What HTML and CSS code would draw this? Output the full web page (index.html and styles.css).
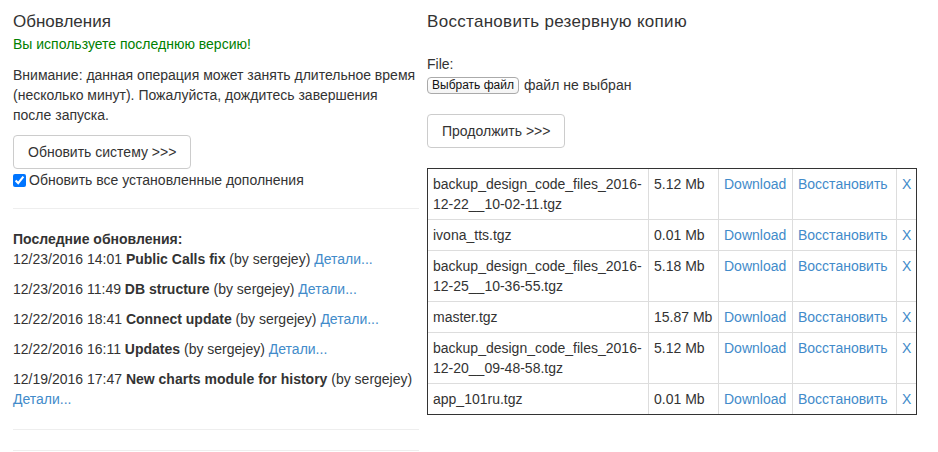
FILE: index.html
```html
<!DOCTYPE html>
<html lang="ru">
<head>
<meta charset="utf-8">
<title>Обновления</title>
<link rel="stylesheet" href="styles.css">
</head>
<body>
<div class="page">
  <div class="col-left">
    <h4 class="title">Обновления</h4>
    <div class="success">Вы используете последнюю версию!</div>
    <p class="note">Внимание: данная операция может занять длительное время (несколько минут). Пожалуйста, дождитесь завершения после запуска.</p>
    <button class="btn" type="button">Обновить систему &gt;&gt;&gt;</button>
    <label class="check"><input type="checkbox" checked> Обновить все установленные дополнения</label>
    <hr class="rule">
    <div class="history">
      <div class="history-title">Последние обновления:</div>
      <p class="item">12/23/2016 14:01 <b>Public Calls fix</b> (by sergejey) <a href="#">Детали...</a></p>
      <p class="item">12/23/2016 11:49 <b>DB structure</b> (by sergejey) <a href="#">Детали...</a></p>
      <p class="item">12/22/2016 18:41 <b>Connect update</b> (by sergejey) <a href="#">Детали...</a></p>
      <p class="item">12/22/2016 16:11 <b>Updates</b> (by sergejey) <a href="#">Детали...</a></p>
      <p class="item">12/19/2016 17:47 <b>New charts module for history</b> (by sergejey) <a href="#">Детали...</a></p>
    </div>
    <hr class="rule">
    <hr class="rule">
  </div>
  <div class="col-right">
    <h4 class="title title-wide">Восстановить резервную копию</h4>
    <div class="file-label">File:</div>
    <div class="file-row"><span class="file-btn">Выбрать файл</span><span class="file-name">файл не выбран</span></div>
    <button class="btn" type="button">Продолжить &gt;&gt;&gt;</button>
    <table class="backups">
      <tr>
        <td class="c-name">backup_design_code_files_2016-12-22__10-02-11.tgz</td>
        <td class="c-size">5.12 Mb</td>
        <td class="c-dl"><a href="#">Download</a></td>
        <td class="c-rs"><a href="#">Восстановить</a></td>
        <td class="c-x"><a href="#">X</a></td>
      </tr>
      <tr>
        <td>ivona_tts.tgz</td>
        <td>0.01 Mb</td>
        <td><a href="#">Download</a></td>
        <td><a href="#">Восстановить</a></td>
        <td><a href="#">X</a></td>
      </tr>
      <tr>
        <td>backup_design_code_files_2016-12-25__10-36-55.tgz</td>
        <td>5.18 Mb</td>
        <td><a href="#">Download</a></td>
        <td><a href="#">Восстановить</a></td>
        <td><a href="#">X</a></td>
      </tr>
      <tr>
        <td>master.tgz</td>
        <td>15.87 Mb</td>
        <td><a href="#">Download</a></td>
        <td><a href="#">Восстановить</a></td>
        <td><a href="#">X</a></td>
      </tr>
      <tr>
        <td>backup_design_code_files_2016-12-20__09-48-58.tgz</td>
        <td>5.12 Mb</td>
        <td><a href="#">Download</a></td>
        <td><a href="#">Восстановить</a></td>
        <td><a href="#">X</a></td>
      </tr>
      <tr>
        <td>app_101ru.tgz</td>
        <td>0.01 Mb</td>
        <td><a href="#">Download</a></td>
        <td><a href="#">Восстановить</a></td>
        <td><a href="#">X</a></td>
      </tr>
    </table>
  </div>
</div>
</body>
</html>
```

FILE: styles.css
```css
html, body {
  margin: 0;
  padding: 0;
  background: #fff;
}
body {
  font-family: "Liberation Sans", Arial, sans-serif;
  font-size: 14px;
  line-height: 20px;
  color: #333;
}
a {
  color: #428bca;
  text-decoration: none;
}
.page {
  display: grid;
  grid-template-columns: 406px 490px;
  column-gap: 8px;
  padding: 12px 0 0 13px;
  align-items: start;
}
.col-left, .col-right {
  display: flex;
  flex-direction: column;
  align-items: flex-start;
}
.title {
  margin: 0;
  font-size: 17px;
  font-weight: normal;
  line-height: 20px;
}
.title-wide {
  letter-spacing: 0.3px;
}
.success {
  color: #008000;
  margin-top: 2px;
}
.note {
  margin: 11px 0 0;
}
.btn {
  margin-top: 10px;
  font: inherit;
  color: #333;
  background: #fff;
  border: 1px solid #ccc;
  border-radius: 4px;
  padding: 6px 14px;
  line-height: 20px;
}
.check {
  display: flex;
  align-items: center;
  margin-top: 1px;
}
.check input {
  margin: 0 3px 0 0;
  width: 13px;
  height: 13px;
}
.rule {
  align-self: stretch;
  border: 0;
  border-top: 1px solid #eee;
  margin: 18px 0 0;
  height: 0;
}
.rule + .rule {
  margin-top: 20px;
}
.history {
  margin-top: 20px;
}
.history-title {
  font-weight: bold;
}
.item {
  margin: 0 0 10px;
}
.history + .rule {
  margin-top: 10px;
}
.file-label {
  margin-top: 22px;
}
.file-row {
  display: flex;
  align-items: center;
  margin-top: 2px;
  height: 18px;
}
.file-btn {
  display: inline-block;
  box-sizing: border-box;
  width: 92px;
  height: 17px;
  border: 1px solid #aaa;
  border-radius: 4px;
  background: linear-gradient(#fff, #f4f4f4);
  font-size: 12px;
  line-height: 15px;
  text-align: center;
  color: #111;
}
.file-name {
  margin-left: 5px;
}
.col-right .btn {
  margin-top: 20px;
}
.backups {
  margin-top: 20px;
  width: 490px;
  table-layout: fixed;
  border-collapse: separate;
  border-spacing: 0;
  border: 1px solid #333;
}
.backups td {
  box-sizing: border-box;
  padding: 5px;
  vertical-align: top;
  border-right: 1px solid #ddd;
  border-bottom: 1px solid #ddd;
  line-height: 20px;
}
.backups td:last-child {
  border-right: 0;
}
.backups tr:last-child td {
  border-bottom: 0;
}
.c-name { width: 221px; }
.c-size { width: 70px; white-space: nowrap; }
.c-dl { width: 74px; }
.c-rs { width: 104px; }
.c-x { width: 19px; }
```
